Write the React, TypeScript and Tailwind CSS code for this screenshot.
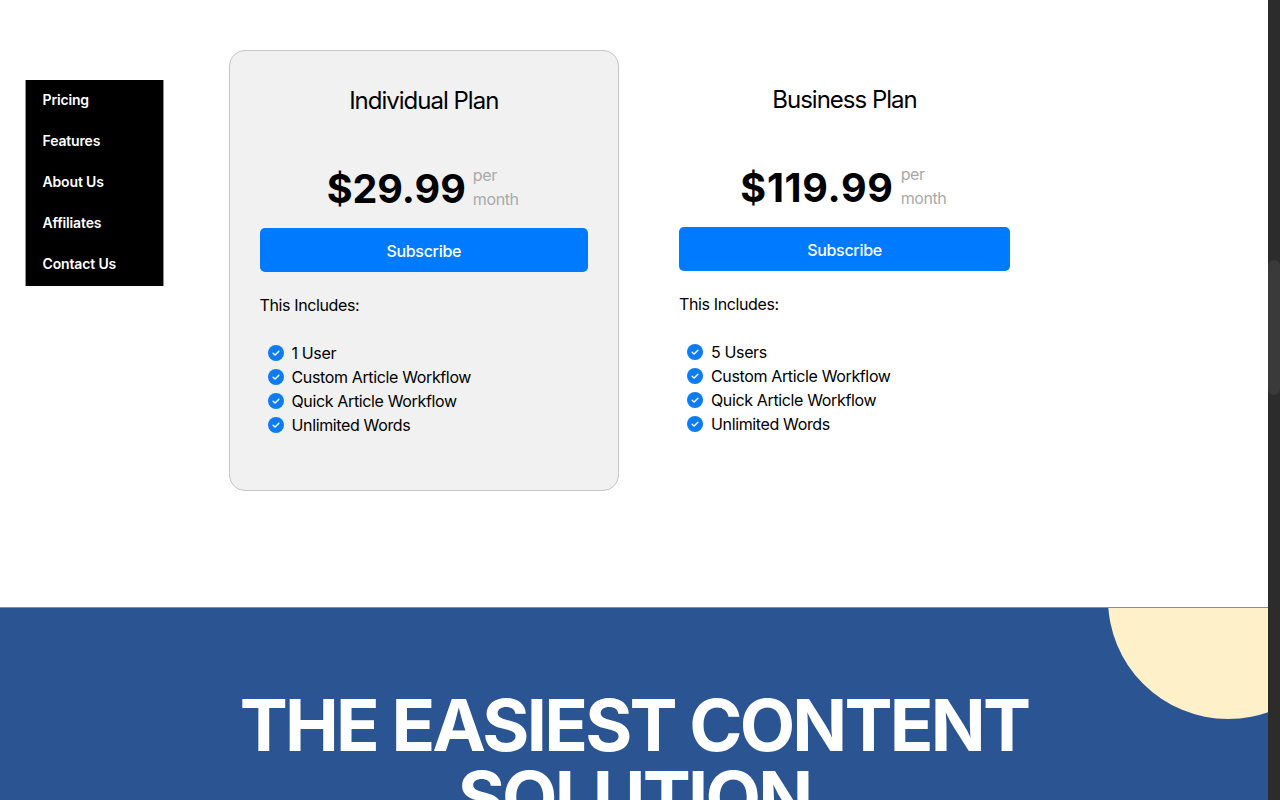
type PlanProps = {
  name: string;
  price: string;
  features: string[];
  highlighted?: boolean;
};

const navLinks = ["Pricing", "Features", "About Us", "Affiliates", "Contact Us"];

function Check() {
  return (
    <svg viewBox="0 0 16 16" className="mb-[1px] h-4 w-4 shrink-0">
      <circle cx="8" cy="8" r="8" fill="#0d7bf2" />
      <path d="M5.1 8.2 7.1 10 10.9 6.2" fill="none" stroke="#fff" strokeWidth="1.4" strokeLinecap="round" strokeLinejoin="round" />
    </svg>
  );
}

function Plan({ name, price, features, highlighted }: PlanProps) {
  return (
    <div
      className={`h-[441px] rounded-[16px] border px-[30px] ${
        highlighted ? "w-[390.5px] border-[#c6c6c6] bg-[#f1f1f1]" : "w-[393px] border-transparent bg-white"
      }`}
    >
      <h3 className="mt-[33px] h-[34px] text-center text-[24px] leading-[34px] tracking-[-1px] text-black">{name}</h3>
      <div className="mt-[38px] flex h-[64px] items-center justify-center gap-[7px]">
        <span
          className={`pt-[2px] text-[39.5px] leading-[64px] font-bold text-black ${
            highlighted ? "tracking-normal" : "tracking-[0.7px]"
          }`}
        >
          {price}
        </span>
        <span className="mb-[2px] w-[48px] text-[16px] leading-[24px] tracking-[-0.4px] text-[#a9a9a9]">per month</span>
      </div>
      <button
        type="button"
        className="mt-[8px] h-[44px] w-full rounded-[5px] bg-[#007bff] pt-[1px] text-[16px] font-medium tracking-[-0.3px] text-white"
      >
        Subscribe
      </button>
      <p className="mt-[21px] text-[16px] leading-[24px] tracking-[-0.38px] text-black">This Includes:</p>
      <ul className="mt-[24px] pl-[8px]">
        {features.map((feature) => (
          <li key={feature} className="flex h-[24px] items-center gap-[8px] text-[16px] tracking-[-0.36px] text-black">
            <Check />
            {feature}
          </li>
        ))}
      </ul>
    </div>
  );
}

export default function App() {
  return (
    <div className="flex h-[800px] w-[1280px] overflow-hidden bg-white font-['Inter',sans-serif]">
      <main className="w-[1268px] shrink-0">
        <section className="flex h-[608px] border-b border-[#8a8a8a]">
          <nav className="mt-[80px] ml-[25px] h-[206px] w-[139px] border-x border-[#8f8f8f] bg-black">
            {navLinks.map((link) => (
              <a key={link} href="#" className="block h-[41px] pl-[16.5px] text-[14px] leading-[40px] font-semibold tracking-[-0.15px] text-white">
                {link}
              </a>
            ))}
          </nav>
          <div className="mt-[50px] ml-[64.5px]">
            <Plan
              highlighted
              name="Individual Plan"
              price="$29.99"
              features={["1 User", "Custom Article Workflow", "Quick Article Workflow", "Unlimited Words"]}
            />
          </div>
          <div className="mt-[49px] ml-[29px]">
            <Plan
              name="Business Plan"
              price="$119.99"
              features={["5 Users", "Custom Article Workflow", "Quick Article Workflow", "Unlimited Words"]}
            />
          </div>
        </section>
        <section className="relative h-[192px] overflow-hidden bg-[#2b5592]">
          <div className="absolute top-[-129px] left-[1108px] h-[240px] w-[240px] rounded-full bg-[#fef0c9]" />
          <h1 className="pt-[81px] text-center text-[72px] leading-[72px] font-bold tracking-[-2.75px] text-white">
            THE EASIEST CONTENT
            <br />
            SOLUTION
          </h1>
        </section>
      </main>
      <div className="w-[12px] shrink-0 bg-[#2c2c2c] pt-[260px]">
        <div className="h-[135px] rounded-full bg-[#3a3a3a]" />
      </div>
    </div>
  );
}
